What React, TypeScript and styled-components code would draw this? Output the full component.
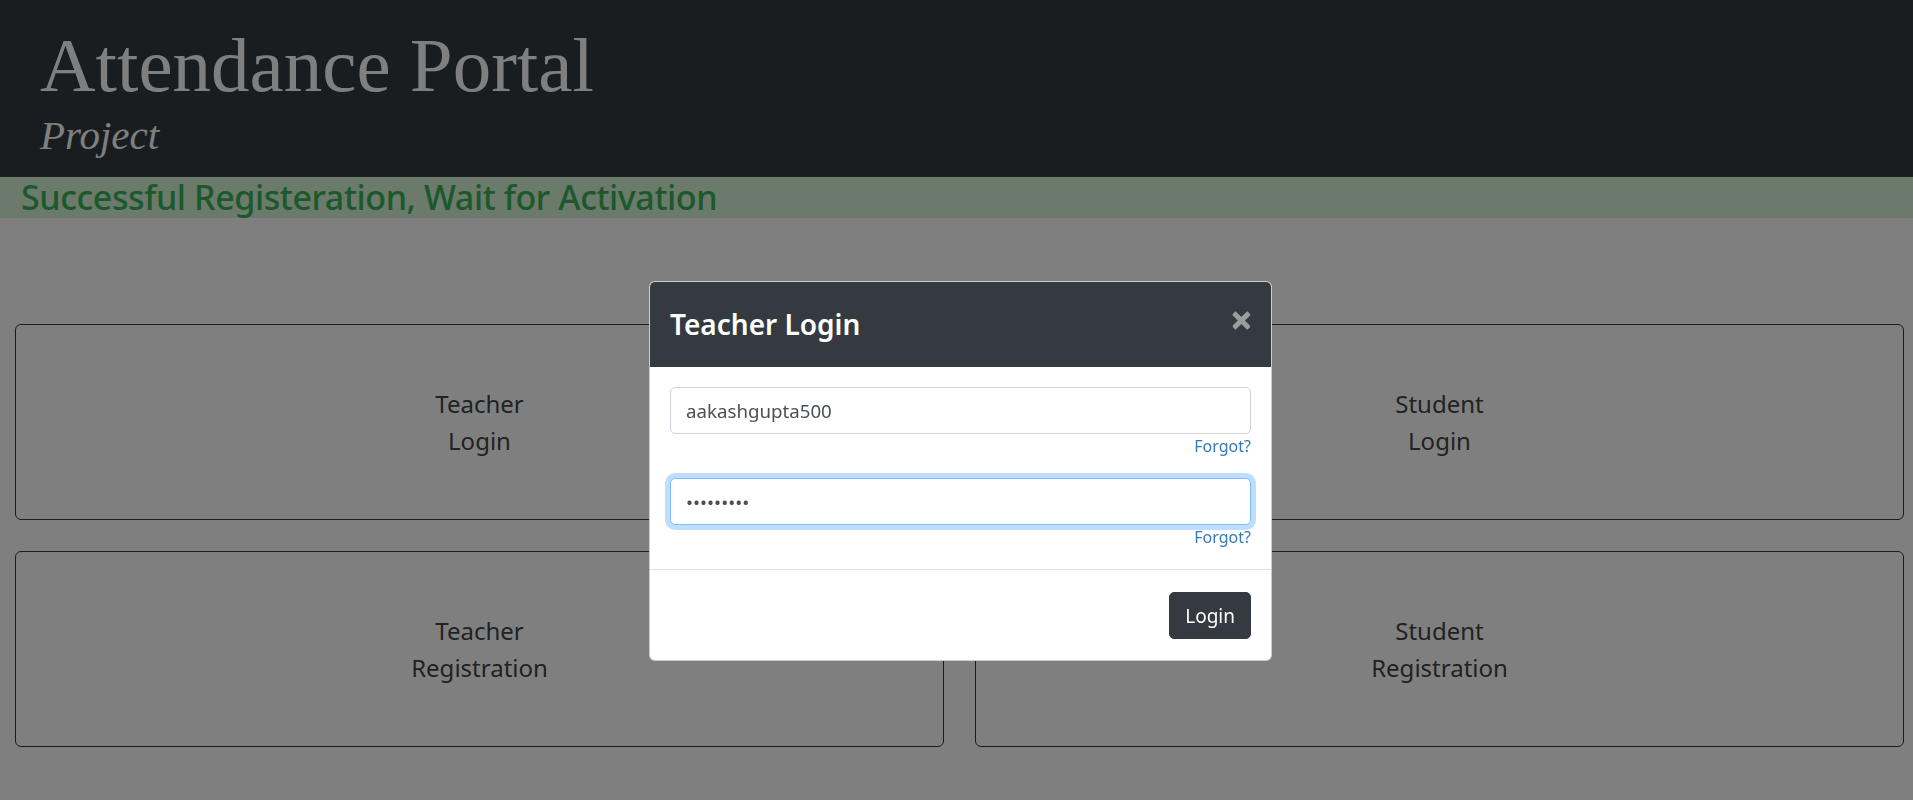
import React from "react";
import styled, { createGlobalStyle, css } from "styled-components";

const GlobalStyle = createGlobalStyle`
  html, body { margin: 0; padding: 0; }
  body {
    background: #ffffff;
    font-family: "Noto Sans", "Open Sans", sans-serif;
    font-size: 20px;
    line-height: 1.5;
    color: #444;
    min-height: 800px;
  }
  * { box-sizing: border-box; }
`;

const Page = styled.div`
  min-height: 800px;
  background: #fff;
`;

const Header = styled.header`
  height: 177px;
  background: #343a40;
  padding: 27px 0 0 40px;
  display: flex;
  flex-direction: column;
`;

const Title = styled.h1`
  margin: 0;
  font-family: "Liberation Serif", "Times New Roman", serif;
  font-weight: 400;
  font-size: 77px;
  line-height: 77px;
  color: #ffffff;
`;

const Subtitle = styled.h2`
  margin: 11px 0 0;
  font-family: "Liberation Serif", "Times New Roman", serif;
  font-style: italic;
  font-weight: 400;
  font-size: 41px;
  line-height: 40px;
  color: #ffffff;
`;

const Alert = styled.div`
  height: 41px;
  background: #d6f4d6;
  padding-left: 21px;
  font-size: 34px;
  letter-spacing: -0.4px;
  line-height: 41px;
  font-weight: 500;
  color: #36b258;
  white-space: nowrap;
`;

const CardGrid = styled.main`
  display: grid;
  grid-template-columns: 1fr 1fr;
  column-gap: 31px;
  row-gap: 31px;
  padding: 106px 9px 0 15px;
`;

const Card = styled.a`
  height: 196px;
  border: 1px solid #343a40;
  border-radius: 6px;
  display: flex;
  align-items: center;
  justify-content: center;
  text-align: center;
  font-size: 24px;
  line-height: 37px;
  color: #444;
  text-decoration: none;
`;

const Backdrop = styled.div`
  position: fixed;
  inset: 0;
  background: rgba(0, 0, 0, 0.5);
`;

const ModalLayer = styled.div`
  position: fixed;
  inset: 0;
  padding: 281px 0 0 649px;
`;

const Dialog = styled.div`
  width: 623px;
  background: #fff;
  border: 1px solid rgba(0, 0, 0, 0.2);
  border-radius: 6px;
  overflow: hidden;
  display: flex;
  flex-direction: column;
`;

const ModalHeader = styled.div`
  background: #343a40;
  padding: 20px;
  display: flex;
  align-items: flex-start;
  justify-content: space-between;
`;

const ModalTitle = styled.h4`
  margin: 0;
  font-size: 28px;
  line-height: 45px;
  font-weight: 600;
  color: #fff;
`;

const CloseButton = styled.button`
  background: transparent;
  border: 0;
  padding: 14px 18px 20px 20px;
  margin: -20px -20px -20px auto;
  font-family: "Noto Sans", sans-serif;
  font-size: 40px;
  font-weight: 700;
  line-height: 45px;
  color: #fff;
  opacity: 0.5;
  text-shadow: 0 1px 0 #fff;
  cursor: pointer;
`;

const ModalBody = styled.div`
  padding: 20px;
  display: flex;
  flex-direction: column;
  gap: 20px;
`;

const FormGroup = styled.div`
  display: flex;
  flex-direction: column;
`;

const Input = styled.input<{ $focused?: boolean }>`
  height: 47px;
  width: 100%;
  padding: 0 15px;
  font-family: "Noto Sans", sans-serif;
  font-size: 18.7px;
  color: #495057;
  background: #fff;
  border: 1px solid #ced4da;
  border-radius: 5px;
  outline: none;
  ${(p) =>
    p.$focused &&
    css`
      border-color: #80bdff;
      box-shadow: 0 0 0 5px rgba(0, 123, 255, 0.25);
    `}
`;

const ForgotLink = styled.a`
  align-self: flex-end;
  font-size: 16px;
  line-height: 24px;
  color: #337ab7;
  text-decoration: none;
`;

const ModalFooter = styled.div`
  border-top: 1px solid #dee2e6;
  padding: 22px 20px 21px;
  display: flex;
  justify-content: flex-end;
`;

const LoginButton = styled.button`
  background: #343a40;
  border: 1px solid #343a40;
  color: #fff;
  font-family: "Noto Sans", sans-serif;
  font-size: 19px;
  line-height: 30px;
  padding: 7.5px 15px;
  border-radius: 5px;
  cursor: pointer;
`;

const cards = [
  ["Teacher", "Login"],
  ["Student", "Login"],
  ["Teacher", "Registration"],
  ["Student", "Registration"],
];

export default function App() {
  return (
    <>
      <GlobalStyle />
      <Page>
        <Header>
          <Title>Attendance Portal</Title>
          <Subtitle>Project</Subtitle>
        </Header>
        <Alert>Successful Registeration, Wait for Activation</Alert>
        <CardGrid>
          {cards.map(([a, b]) => (
            <Card key={a + b} href="#">
              <span>
                {a}
                <br />
                {b}
              </span>
            </Card>
          ))}
        </CardGrid>
      </Page>
      <Backdrop />
      <ModalLayer>
        <Dialog>
          <ModalHeader>
            <ModalTitle>Teacher Login</ModalTitle>
            <CloseButton aria-label="Close">×</CloseButton>
          </ModalHeader>
          <ModalBody>
            <FormGroup>
              <Input type="text" defaultValue="aakashgupta500" />
              <ForgotLink href="#">Forgot?</ForgotLink>
            </FormGroup>
            <FormGroup>
              <Input type="password" defaultValue="123456789" $focused />
              <ForgotLink href="#">Forgot?</ForgotLink>
            </FormGroup>
          </ModalBody>
          <ModalFooter>
            <LoginButton>Login</LoginButton>
          </ModalFooter>
        </Dialog>
      </ModalLayer>
    </>
  );
}
